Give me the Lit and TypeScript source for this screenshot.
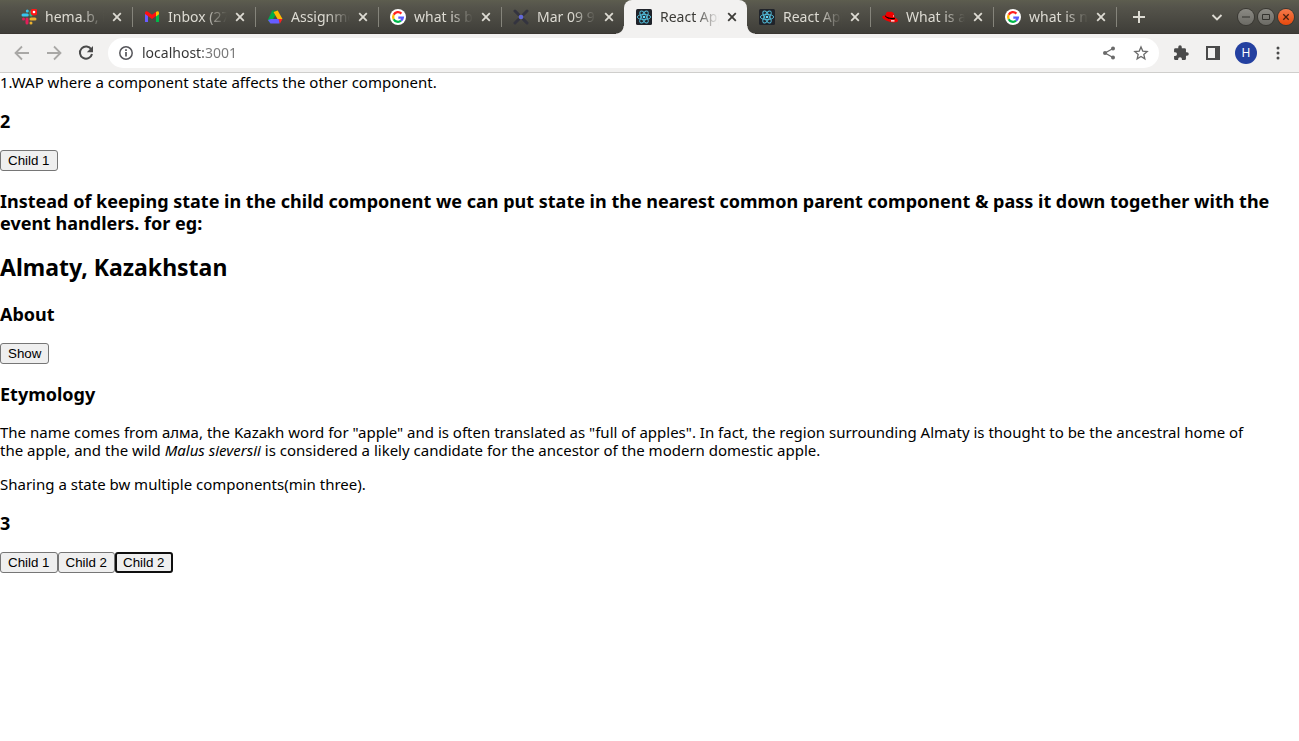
import { LitElement, html, svg, css, nothing } from "lit";
import { customElement, state } from "lit/decorators.js";
import { classMap } from "lit/directives/class-map.js";

const slack = svg`
  <g stroke-width="3" stroke-linecap="round">
    <path d="M6.300 2v0M2 6h4.300" stroke="#36c5f0"/><path d="M10 6V3" stroke="#2eb67d"/>
    <path d="M6 10v4M2.500 10h0" stroke="#e01e5a"/><path d="M10 10h4M10 14h0" stroke="#ecb22e"/>
  </g>
  <circle cx="13" cy="3" r="3.500" fill="#ff1616"/><circle cx="13" cy="3" r="1.300" fill="#fff"/>`;
const gmail = svg`
  <path d="M1 4v9h3V6.500z" fill="#6a5cff"/><path d="M12 6.500V13h3V4z" fill="#00b84a"/>
  <path d="M1 5V4c0-2 2-2 3-1.200l4 3 4-3v4.200L8 10 4 7z" fill="#ff1010"/>
  <path d="M12 3c1.500-1.200 3-.8 3 1v1.200L12 7.500z" fill="#ffba00"/>`;
const drive = svg`
  <path d="M5.300 1.500h1.800L9 5 3.500 14.500.8 11z" fill="#00ac47"/>
  <path d="M5.300 1.500h5.400L8 6z" fill="#12883c"/>
  <path d="M10.700 1.500 15.500 10h-5L6.500 3z" fill="#ffba00"/>
  <path d="M4 10h8.500v4.500h-9L1 11z" fill="#665cff"/>
  <path d="M11.500 10h4l-2.500 4.500z" fill="#f22"/>`;
const google = svg`
  <circle cx="8" cy="8" r="8" fill="#fff"/>
  <g stroke-width="2.300" transform="translate(8 8)">
    <path d="M3.400-3.400A4.800 4.800 0 0 0-4.300-2.200" stroke="#f22"/>
    <path d="M-4.300-2.200A4.800 4.800 0 0 0-4.300 2.200" stroke="#ffba00"/>
    <path d="M-4.300 2.200A4.800 4.800 0 0 0 3 3.700" stroke="#00b84a"/>
    <path d="M3 3.700A4.800 4.800 0 0 0 4.800.7H.3" stroke="#5a5cff"/>
  </g>`;
const cross = svg`
  <path d="M2 2l3.500 3.500M14 2l-3.500 3.500M2 14l3.500-3.500M14 14l-3.500-3.500" stroke="#34343f" stroke-width="3" stroke-linecap="round"/>
  <circle cx="8" cy="8" r="2.300" fill="#6268d8"/>`;
const react = svg`
  <rect width="16" height="16" rx="1.500" fill="#20232a"/>
  <g stroke="#53bfdc" stroke-width=".9">
    <ellipse cx="8" cy="8" rx="6.700" ry="2.600"/>
    <ellipse cx="8" cy="8" rx="6.700" ry="2.600" transform="rotate(60 8 8)"/>
    <ellipse cx="8" cy="8" rx="6.700" ry="2.600" transform="rotate(120 8 8)"/>
  </g><circle cx="8" cy="8" r="1.300" fill="#61dafb"/>`;
const redhat = svg`
  <path d="M4 4.500C4.500 2.500 6 2.500 7 3c1.500-.6 4-.3 4.800 1.500l1 4c2 .8 3.200 2 3.200 3 0 2.500-5 2.300-8.500 1.200C4 11.700.2 9.500.2 8c0-1.100 1.400-1.500 3-1.500z" fill="#f00000"/>
  <path d="M3.300 6.200c1.200 2.200 5.700 3.400 9.600 2.500v1.200C8.500 11 3.800 9.200 3.100 7.300z" fill="#000"/>
  <path d="M9 11.800h3.500M11 7h1" stroke="#fff" stroke-width="1.200"/>`;

const TABS = [
  { title: "hema.b, inbox", icon: slack },
  { title: "Inbox (27)", icon: gmail },
  { title: "Assignment", icon: drive },
  { title: "what is b", icon: google },
  { title: "Mar 09 9:0", icon: cross },
  { title: "React App", icon: react },
  { title: "React App", icon: react },
  { title: "What is a", icon: redhat },
  { title: "what is n", icon: google },
];

@customElement("browser-tabs")
export class BrowserTabs extends LitElement {
  @state() private active = 5;

  static styles = css`
    :host { display: block; font: 14px/34px "Noto Sans", sans-serif; }
    .bar { display: flex; height: 34px; padding: 0 5px 0 9px; color: #dddbd3;
      background: linear-gradient(#5d5d4f, #55544b 20%, #3f3e39 96%, #38332f); }
    .tab { flex: 0 1 123px; min-width: 0; display: flex; align-items: center; position: relative; }
    .tab.line::after { content: ""; position: absolute; right: -1px; top: 7px; width: 1px; height: 20px; background: #85847b; }
    .active { background: #f2f1f0; color: #3c3b37; border-radius: 8px 8px 0 0; }
    .active::before, .active::after { content: ""; position: absolute; bottom: 0; width: 8px; height: 8px; }
    .active::before { right: 100%; background: radial-gradient(circle at 0 0, transparent 7px, #f2f1f0 8px); }
    .active::after { left: 100%; background: radial-gradient(circle at 100% 0, transparent 7px, #f2f1f0 8px); }
    button { border: 0; background: none; padding: 0; margin: 0; color: inherit; font: inherit; }
    svg { display: block; fill: none; flex: none; }
    .pick { flex: 1; min-width: 0; display: flex; align-items: center; gap: 8px; padding-left: 12px; text-align: left; }
    .title { flex: 1; white-space: nowrap; overflow: hidden;
      -webkit-mask-image: linear-gradient(90deg, #000 60%, transparent); mask-image: linear-gradient(90deg, #000 60%, transparent); }
    .close { padding: 0 10px 0 8px; }
    .plus { padding: 0 16px; }
    .right { margin-left: auto; display: flex; align-items: center; gap: 4px; }
    .chev { padding: 0 11px; }
    .win { width: 16px; height: 16px; border-radius: 50%; display: grid; place-items: center;
      background: linear-gradient(#8b8a84, #6c6b65); box-shadow: 0 0 0 1px #393833; color: #33322e; }
    .quit { background: linear-gradient(#f47a4b, #e8490c); color: #47200f; }
  `;

  render() {
    return html`<div class="bar">
      ${TABS.map((t, i) => html`<div class=${classMap({ tab: true, active: i === this.active, line: i !== this.active && i !== this.active - 1 })}>
        <button class="pick" @click=${() => (this.active = i)}>
          <svg width="16" height="16" viewBox="0 0 16 16">${t.icon}</svg><span class="title">${t.title}</span>
        </button>
        <button class="close" aria-label="Close tab"><svg width="10" height="10" viewBox="0 0 10 10"><path d="M1.200 1.200l7.600 7.600M8.800 1.200L1.200 8.800" stroke="currentColor" stroke-width="1.800"/></svg></button>
      </div>`)}
      <button class="plus" aria-label="New tab"><svg width="14" height="14" viewBox="0 0 14 14"><path d="M7 1v12M1 7h12" stroke="currentColor" stroke-width="2"/></svg></button>
      <div class="right">
        <button class="chev" aria-label="Search tabs"><svg width="12" height="12" viewBox="0 0 12 12"><path d="M1.500 4L6 8.500 10.500 4" stroke="currentColor" stroke-width="1.900"/></svg></button>
        <button class="win" aria-label="Minimize"><svg width="10" height="10" viewBox="0 0 10 10"><path d="M1 5h8" stroke="currentColor"/></svg></button>
        <button class="win" aria-label="Maximize"><svg width="10" height="10" viewBox="0 0 10 10"><path d="M1.500 2.500h7v5h-7z" stroke="currentColor"/></svg></button>
        <button class="win quit" aria-label="Close window"><svg width="10" height="10" viewBox="0 0 10 10"><path d="M2.300 2.300l5.400 5.400M7.700 2.300L2.300 7.700" stroke="currentColor" stroke-width="1.300"/></svg></button>
      </div>
    </div>`;
  }
}

@customElement("browser-toolbar")
export class BrowserToolbar extends LitElement {
  static styles = css`
    :host { display: block; }
    .bar { display: flex; align-items: center; height: 38px; padding: 0 12px 0 14px; background: #f2f1f0; border-bottom: 1px solid #cfcecc; color: #4a4a4a; }
    button { border: 0; background: none; padding: 0; margin: 0; color: inherit; }
    svg { display: block; fill: none; }
    .nav { display: flex; gap: 16px; padding-right: 14px; }
    .off { color: #a9a8a6; }
    .omni { flex: 1; min-width: 0; height: 30px; display: flex; align-items: center; gap: 16px; padding: 0 10px; border-radius: 15px; background: #fff; color: #6a6a6a; }
    .omni label { margin-right: -8px; }
    input { flex: 1; min-width: 0; border: 0; outline: 0; padding: 0; height: 20px; font: 14px/20px "Noto Sans", sans-serif;
      color: transparent; background: linear-gradient(90deg, #333 61px, #777 61px); -webkit-background-clip: text; background-clip: text; }
    .tools { display: flex; align-items: center; gap: 12px; padding-left: 12px; }
    .me { width: 22px; height: 22px; border-radius: 50%; background: #2440a0; color: #fff; font: 12px/22px "Noto Sans", sans-serif; text-align: center; }
  `;

  render() {
    return html`<div class="bar">
      <div class="nav">
        <button class="off" aria-label="Back"><svg width="16" height="16" viewBox="0 0 16 16"><path d="M15 8H2M8 1.500L1.500 8 8 14.500" stroke="currentColor" stroke-width="1.800"/></svg></button>
        <button class="off" aria-label="Forward"><svg width="16" height="16" viewBox="0 0 16 16"><path d="M1 8h13M8 1.500L14.500 8 8 14.500" stroke="currentColor" stroke-width="1.800"/></svg></button>
        <button aria-label="Reload"><svg width="16" height="16" viewBox="0 0 16 16"><path d="M13.300 4.500A6.100 6.100 0 1 0 14 9" stroke="currentColor" stroke-width="2"/><path d="M15 1v6.200H8.800z" fill="currentColor"/></svg></button>
      </div>
      <div class="omni">
        <label for="url"><svg width="16" height="16" viewBox="0 0 16 16"><circle cx="8" cy="8" r="6.200" stroke="#55555a" stroke-width="1.500"/><path d="M8 7v4.500M8 4.300v1.700" stroke="#55555a" stroke-width="1.700"/></svg></label>
        <input id="url" type="text" aria-label="Address" value="localhost:3001">
        <button aria-label="Share"><svg width="16" height="16" viewBox="0 0 16 16"><path d="M12 3.500L4 8l8 4.500" stroke="currentColor" stroke-width="1.300"/><g fill="currentColor"><circle cx="12" cy="3.500" r="2"/><circle cx="4" cy="8" r="2"/><circle cx="12" cy="12.500" r="2"/></g></svg></button>
        <button aria-label="Bookmark"><svg width="16" height="16" viewBox="0 0 16 16"><path d="M8 2l1.750 4.100 4.450.4-3.380 2.930 1.010 4.340L8 11.450l-3.830 2.320 1.010-4.340L1.800 6.500l4.450-.4z" stroke="currentColor" stroke-width="1.300"/></svg></button>
      </div>
      <div class="tools">
        <button aria-label="Extensions"><svg width="20" height="20" viewBox="0 0 24 24"><path fill="currentColor" d="M20.500 11H19V7a2 2 0 0 0-2-2h-4V3.500a2.500 2.500 0 0 0-5 0V5H4a2 2 0 0 0-2 2v3.800h1.500a2.700 2.700 0 0 1 0 5.400H2V20a2 2 0 0 0 2 2h3.800v-1.500a2.700 2.700 0 0 1 5.400 0V22H17a2 2 0 0 0 2-2v-4h1.500a2.500 2.500 0 0 0 0-5z" transform="translate(2 2) scale(.84)"/></svg></button>
        <button aria-label="Side panel"><svg width="20" height="20" viewBox="0 0 20 20"><path d="M4 4h12v12H4z" stroke="currentColor" stroke-width="2"/><path d="M12 4h4v12h-4z" fill="currentColor"/></svg></button>
        <button class="me" aria-label="Profile">H</button>
        <button aria-label="Menu"><svg width="18" height="16" viewBox="0 0 18 16"><g fill="currentColor"><circle cx="9" cy="3" r="1.500"/><circle cx="9" cy="8" r="1.500"/><circle cx="9" cy="13" r="1.500"/></g></svg></button>
      </div>
    </div>`;
  }
}

@customElement("app-root")
export class AppRoot extends LitElement {
  @state() private first = 2;
  @state() private shared = 3;
  @state() private about = false;

  static styles = css`
    :host { display: block; min-height: 100vh; background: #fff; color: #000; font: 15px/18px "Noto Sans", sans-serif; }
    main { display: flow-root; }
    p { margin: 16px 0; padding-right: 32px; }
    .lead { margin: 0; }
    h2 { margin: 19px 0 22px; font-size: 23px; line-height: 28px; }
    h3 { margin: 19px 0 18px; font-size: 18px; line-height: 22px; }
    .row { display: flex; }
    .row button { margin: 0; padding: 2px 7px; border: 1px solid #767676; border-radius: 3px; background: #efefef; color: #000;
      font-family: "Liberation Sans", sans-serif; line-height: 15px; }
    .row .focused { padding: 1px 6px; border: 2px solid #101010; }
  `;

  render() {
    return html`
      <browser-tabs></browser-tabs>
      <browser-toolbar></browser-toolbar>
      <main>
        <p class="lead">1.WAP where a component state affects the other component.</p>
        <h3>${this.first}</h3>
        <div class="row"><button @click=${() => this.first++}>Child 1</button></div>
        <h3>Instead of keeping state in the child component we can put state in the nearest common parent component &amp; pass it down together with the event handlers. for eg:</h3>
        <h2>Almaty, Kazakhstan</h2>
        <h3>About</h3>
        ${this.about ? nothing : html`<div class="row"><button @click=${() => (this.about = true)}>Show</button></div>`}
        <h3>Etymology</h3>
        <p>The name comes from <span lang="kk-KZ">алма</span>, the Kazakh word for "apple" and is often translated as "full of apples". In fact, the region surrounding Almaty is thought to be the ancestral home of the apple, and the wild <i lang="la">Malus sieversii</i> is considered a likely candidate for the ancestor of the modern domestic apple.</p>
        <p>Sharing a state bw multiple components(min three).</p>
        <h3>${this.shared}</h3>
        <div class="row">
          <button @click=${() => this.shared++}>Child 1</button>
          <button @click=${() => this.shared++}>Child 2</button>
          <button class="focused" @click=${() => this.shared++}>Child 2</button>
        </div>
      </main>`;
  }
}
